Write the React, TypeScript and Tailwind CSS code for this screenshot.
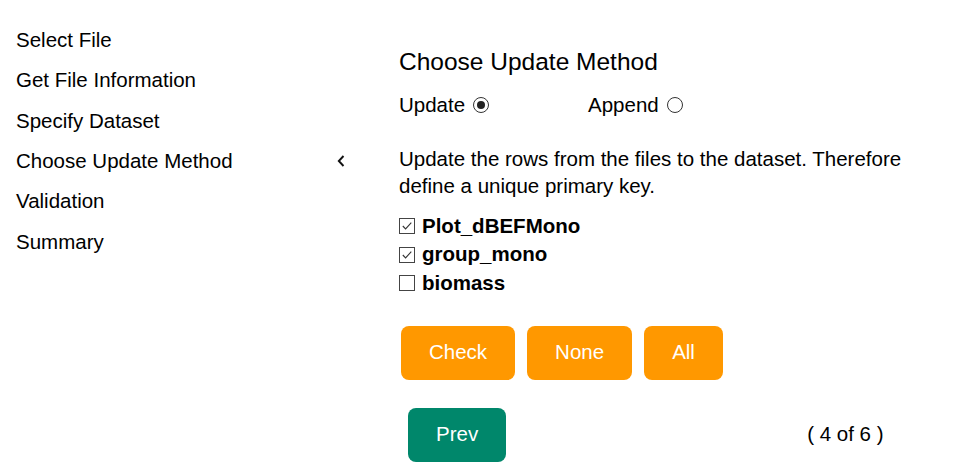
import { useState } from 'react';

const steps = [
  'Select File',
  'Get File Information',
  'Specify Dataset',
  'Choose Update Method',
  'Validation',
  'Summary',
];

const keys = [
  { name: 'Plot_dBEFMono', checked: true },
  { name: 'group_mono', checked: true },
  { name: 'biomass', checked: false },
];

function Radio({ on }: { on: boolean }) {
  return (
    <span className="inline-flex w-[16px] h-[16px] rounded-full border border-[#333] bg-white items-center justify-center ml-[8px]">
      {on && <span className="w-[8px] h-[8px] rounded-full bg-[#222]" />}
    </span>
  );
}

function Box({ on }: { on: boolean }) {
  return (
    <span className="inline-flex w-[16px] h-[16px] border border-[#444] bg-white items-center justify-center shrink-0">
      {on && (
        <svg width="12" height="12" viewBox="0 0 12 12" fill="none">
          <path d="M1.8 6 L4.6 8.9 L10.3 2.6" stroke="#333" strokeWidth="1.1" />
        </svg>
      )}
    </span>
  );
}

export default function App() {
  const [method, setMethod] = useState<'update' | 'append'>('update');
  const [checked, setChecked] = useState(keys.map((k) => k.checked));
  const active = 3;

  return (
    <div
      className="flex w-[959px] h-[470px] bg-white text-black overflow-hidden"
      style={{ fontFamily: '"Liberation Sans", Arial, sans-serif' }}
    >
      {/* Steps */}
      <div className="w-[360px] pt-[20px] pl-[16px] shrink-0">
        {steps.map((s, i) => (
          <div key={s} className="flex items-center justify-between h-[40.4px] text-[20.5px] pr-[15px]">
            <span>{s}</span>
            {i === active && (
              <svg width="8" height="12" viewBox="0 0 8 12" fill="none">
                <path d="M6.5 1 L1.8 6 L6.5 11" stroke="#111" strokeWidth="1.9" />
              </svg>
            )}
          </div>
        ))}
      </div>

      {/* Step body */}
      <div className="pl-[39px] pt-[46px] w-[560px]">
        <h2 className="text-[24.5px] leading-[32px]">Choose Update Method</h2>

        <div className="flex items-center mt-[13px] h-[28px] text-[20.5px]">
          <label className="flex items-center w-[189px]" onClick={() => setMethod('update')}>
            Update <Radio on={method === 'update'} />
          </label>
          <label className="flex items-center" onClick={() => setMethod('append')}>
            Append <Radio on={method === 'append'} />
          </label>
        </div>

        <p className="mt-[26px] text-[20.5px] leading-[27px] w-[520px]">
          Update the rows from the files to the dataset. Therefore define a unique primary key.
        </p>

        <div className="mt-[13px] flex flex-col">
          {keys.map((k, i) => (
            <label
              key={k.name}
              className="flex items-center gap-[7px] h-[28.5px] text-[20.5px] font-bold"
              onClick={() => setChecked(checked.map((c, j) => (j === i ? !c : c)))}
            >
              <Box on={checked[i]} />
              {k.name}
            </label>
          ))}
        </div>

        <div className="flex gap-[12px] mt-[28px] ml-[2px]">
          <button className="h-[54px] px-[28px] rounded-[8px] bg-[#ff9800] text-white text-[20.5px]">Check</button>
          <button className="h-[54px] px-[28px] rounded-[8px] bg-[#ff9800] text-white text-[20.5px]">None</button>
          <button className="h-[54px] px-[28px] rounded-[8px] bg-[#ff9800] text-white text-[20.5px]">All</button>
        </div>

        <div className="flex items-center mt-[28px] ml-[9px]">
          <button className="h-[54px] px-[28px] rounded-[8px] bg-[#00876b] text-white text-[20.5px]">Prev</button>
          <span className="ml-[301px] text-[20.5px]">( 4 of 6 )</span>
        </div>
      </div>
    </div>
  );
}
